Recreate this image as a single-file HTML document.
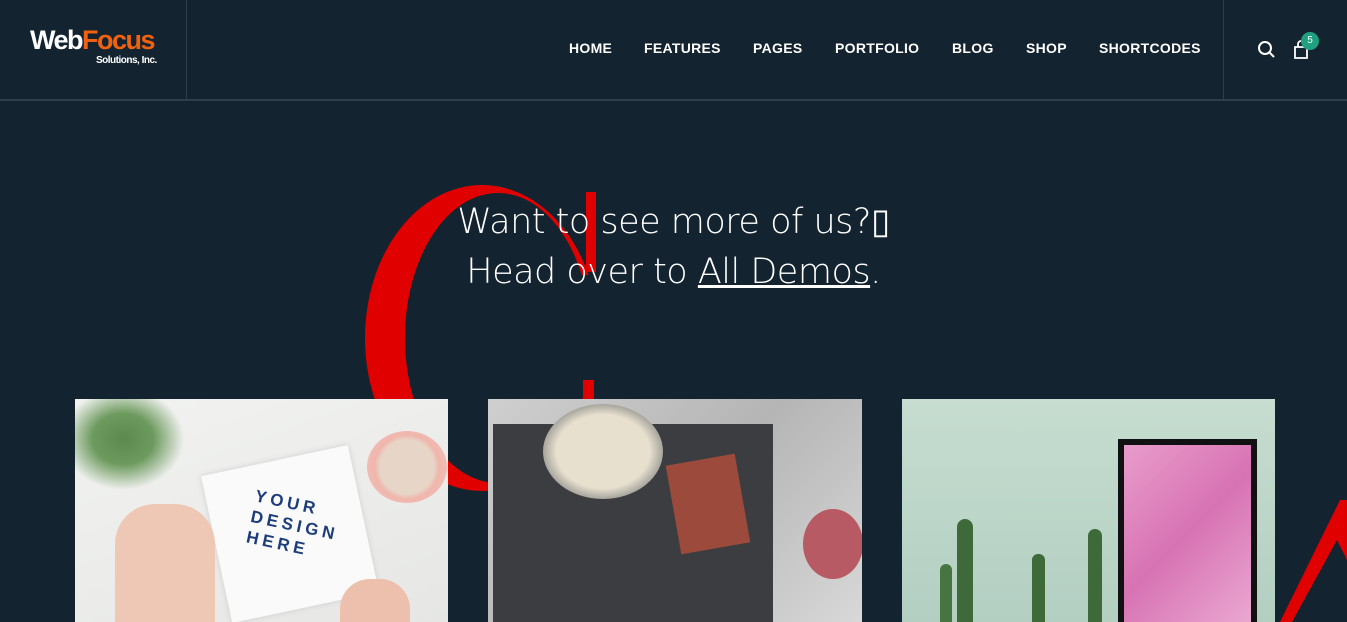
<!DOCTYPE html>
<html><head><meta charset="utf-8"><style>
*{margin:0;padding:0;box-sizing:border-box}
html,body{width:1347px;height:622px;overflow:hidden}
body{background:#132330;font-family:"Liberation Sans",sans-serif;position:relative}
.hdr{position:absolute;left:0;top:0;width:1347px;height:101px;border-bottom:2px solid #2e3f4b}
.vl{position:absolute;top:0;width:1px;height:99px;background:#2e3f4b}
.logo{position:absolute;left:30px;top:25px;color:#fff;font-weight:bold;font-size:27px;letter-spacing:-1.5px;line-height:30px}
.logo span{color:#f0620f}
.sub{position:absolute;left:96px;top:55px;color:#fff;font-size:10px;font-weight:bold;letter-spacing:-.5px}
.nav{position:absolute;top:40px;color:#fff;font-size:14px;font-weight:bold;letter-spacing:.3px}
.t{position:absolute;left:0;width:1347px;text-align:center;color:#fff;font-family:"DejaVu Sans","Liberation Sans",sans-serif;font-weight:300;font-size:35px;letter-spacing:-.5px}
.card{position:absolute;top:399px;height:223px;overflow:hidden}
</style></head><body>
<svg style="position:absolute;left:0;top:0" width="700" height="622">
<defs><clipPath id="cp"><rect x="300" y="150" width="172" height="400"/><rect x="472" y="150" width="130" height="125"/><rect x="472" y="380" width="130" height="170"/></clipPath></defs>
<path clip-path="url(#cp)" fill-rule="evenodd" fill="#e00000" d="M365 338a117 153 0 1 0 234 0a117 153 0 1 0 -234 0zM405 338a93 145 0 1 0 186 0a93 145 0 1 0 -186 0z"/>
<rect x="586" y="192" width="10" height="80" fill="#e00000"/>
<rect x="583" y="380" width="11" height="95" fill="#e00000"/>
</svg>
<svg style="position:absolute;left:1280px;top:500px" width="67" height="122"><polygon points="60,0 67,0 67,60 57,40 12,122 0,122" fill="#e00000"/></svg>
<div class="hdr">
<div class="vl" style="left:186px"></div><div class="vl" style="left:1223px"></div>
<div class="logo">Web<span>Focus</span></div><div class="sub">Solutions, Inc.</div>
<div class="nav" style="left:569px">HOME</div>
<div class="nav" style="left:644px">FEATURES</div>
<div class="nav" style="left:753px">PAGES</div>
<div class="nav" style="left:835px">PORTFOLIO</div>
<div class="nav" style="left:952px">BLOG</div>
<div class="nav" style="left:1026px">SHOP</div>
<div class="nav" style="left:1099px">SHORTCODES</div>
<svg style="position:absolute;left:1257px;top:40px" width="20" height="20"><circle cx="8" cy="8" r="6" stroke="#fff" stroke-width="2" fill="none"/><line x1="12.5" y1="12.5" x2="17" y2="17" stroke="#fff" stroke-width="2"/></svg>
<svg style="position:absolute;left:1292px;top:38px" width="20" height="22"><path d="M3 9h12v11H3z" stroke="#fff" stroke-width="1.8" fill="none"/><path d="M6 9V6a3 3 0 0 1 6 0v3" stroke="#fff" stroke-width="1.8" fill="none"/></svg>
<div style="position:absolute;left:1301px;top:32px;width:18px;height:18px;border-radius:50%;background:#1fa07f;color:#fff;font-size:10px;text-align:center;line-height:18px">5</div>
</div>
<div class="t" style="top:202px">Want to see more of us?▯</div>
<div class="t" style="top:252px">Head over to <u>All Demos</u>.</div>
<div class="card" style="left:75px;width:373px;background:linear-gradient(160deg,#f2f3f1,#e6e7e5)">
 <div style="position:absolute;left:0;top:0;width:120px;height:100px;background:radial-gradient(ellipse at 40% 40%,#5c8a4e 0,#6d9a5e 30%,transparent 60%)"></div>
 <div style="position:absolute;left:140px;top:60px;width:150px;height:150px;background:#fafafa;transform:rotate(-12deg);box-shadow:0 0 6px #ccc"></div>
 <div style="position:absolute;left:175px;top:95px;color:#1d3d7a;font-weight:bold;font-size:17px;letter-spacing:4px;line-height:21px;transform:rotate(12deg)">YOUR<br>DESIGN<br>HERE</div>
 <div style="position:absolute;left:292px;top:32px;width:80px;height:72px;border-radius:50%;background:radial-gradient(circle,#e7d6c7 50%,#f0b6ad 60%,#f3c4bd)"></div>
 <div style="position:absolute;left:40px;top:105px;width:100px;height:118px;background:#efc7b5;border-radius:40px 40px 0 0"></div>
 <div style="position:absolute;left:265px;top:180px;width:70px;height:43px;background:#ecc0ad;border-radius:30px 30px 0 0"></div>
</div>
<div class="card" style="left:488px;width:374px;background:linear-gradient(135deg,#cfcfcf,#b5b5b5 50%,#d8d8d8)">
 <div style="position:absolute;left:5px;top:25px;width:280px;height:198px;background:#3b3d40"></div>
 <div style="position:absolute;left:55px;top:5px;width:120px;height:95px;border-radius:50%;background:radial-gradient(ellipse,#e8e0cf 55%,#a9a79f 70%)"></div>
 <div style="position:absolute;left:185px;top:60px;width:70px;height:90px;background:#9b4a3b;transform:rotate(-10deg)"></div>
 <div style="position:absolute;left:315px;top:110px;width:60px;height:70px;border-radius:50%;background:#b85a63"></div>
</div>
<div class="card" style="left:902px;width:373px;background:linear-gradient(180deg,#c6ddd0,#b3cfc2)">
 <div style="position:absolute;left:216px;top:40px;width:139px;height:183px;background:#111"></div>
 <div style="position:absolute;left:222px;top:46px;width:127px;height:177px;background:linear-gradient(135deg,#e89ccb,#d773b3 50%,#eaa8d2)"></div>
 <div style="position:absolute;left:55px;top:120px;width:16px;height:103px;background:#3e6a3a;border-radius:8px 8px 0 0"></div>
 <div style="position:absolute;left:38px;top:165px;width:12px;height:58px;background:#467541;border-radius:6px 6px 0 0"></div>
 <div style="position:absolute;left:130px;top:155px;width:13px;height:68px;background:#3e6a3a;border-radius:6px 6px 0 0"></div>
 <div style="position:absolute;left:186px;top:130px;width:14px;height:93px;background:#3e6a3a;border-radius:7px 7px 0 0"></div>
</div>
</body></html>
